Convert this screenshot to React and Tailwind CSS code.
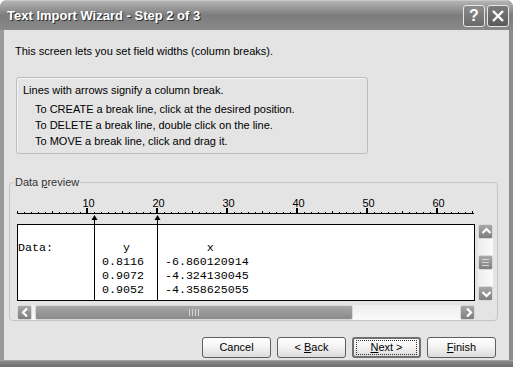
const dataLines = [
  '',
  'Data:          y           x',
  '            0.8116   -6.860120914',
  '            0.9072   -4.324130045',
  '            0.9052   -4.358625055',
];

const Ruler = () => {
  const ticks = [];
  for (let n = 0; n <= 65; n++) {
    if (n % 10 === 0 && n > 0) {
      ticks.push(<rect key={n} x={7 * n - 1} y={12} width={2} height={6} fill="#000" />);
    } else if (n % 5 === 0) {
      ticks.push(<rect key={n} x={7 * n} y={15} width={1} height={3} fill="#000" />);
    } else {
      ticks.push(<rect key={n} x={7 * n} y={16} width={1} height={2} fill="#000" />);
    }
  }
  return (
    <svg width="458" height="28" className="block">
      {[10, 20, 30, 40, 50, 60].map(n => (
        <text
          key={n}
          x={7 * n + 1.5}
          y={11}
          textAnchor="middle"
          fontSize="11"
          fontFamily="Liberation Sans, Arial, sans-serif"
          fill="#000"
        >
          {n}
        </text>
      ))}
      <rect x={0} y={17} width={457} height={1} fill="#000" />
      {ticks}
      {/* break arrows */}
      <polygon points="77.5,19 74.5,24 80.5,24" fill="#000" />
      <polygon points="140.5,19 137.5,24 143.5,24" fill="#000" />
    </svg>
  );
};

const Chevron = ({ dir }) => {
  const paths = {
    up: 'M3.5 9 L7.5 5 L11.5 9',
    down: 'M3.5 6 L7.5 10 L11.5 6',
    left: 'M9 3.5 L5 7.5 L9 11.5',
    right: 'M6 3.5 L10 7.5 L6 11.5',
  };
  return (
    <svg width="15" height="15" className="block">
      <path d={paths[dir]} stroke="#fff" strokeWidth="2.2" fill="none" />
    </svg>
  );
};

const ScrollButton = ({ dir }) => (
  <div className="w-[15px] h-[15px] rounded-[2px] border border-[#d8d8d8] bg-gradient-to-b from-[#a8a8a8] to-[#7e7e7e] flex items-center justify-center overflow-hidden">
    <Chevron dir={dir} />
  </div>
);

const WizButton = ({ children, focused }) => (
  <button
    className={`w-[69px] h-[21px] rounded-[3px] text-[11px] leading-none text-black flex items-center justify-center bg-gradient-to-b from-[#ffffff] via-[#f2f2f2] to-[#dcdcdc] ${
      focused ? 'border-2 border-[#6f6f6f]' : 'border border-[#5e5e5e]'
    }`}
  >
    <span
      className={`flex items-center justify-center ${
        focused ? 'w-[61px] h-[15px] border border-dotted border-[#333]' : ''
      }`}
    >
      {children}
    </span>
  </button>
);

export default function App() {
  return (
    <div className="w-[513px] h-[367px] bg-white overflow-hidden font-['Liberation_Sans',Arial,sans-serif]">
      <div className="h-full flex flex-col rounded-t-[7px] overflow-hidden bg-gradient-to-r from-[#9a9a9a] via-[#868686] to-[#8c8c8c]">
        {/* Title bar */}
        <div className="h-[30px] flex items-center pl-[7px] pr-[4px] bg-gradient-to-b from-[#b4b4b4] via-[#7c7c7c] to-[#8a8a8a] border-t border-[#c8c8c8]">
          <span className="text-[13px] font-bold text-white [text-shadow:1px_1px_0_#2e2e2e] flex-1">
            Text Import Wizard - Step 2 of 3
          </span>
          <div className="flex gap-[2px]">
            <div className="w-[22px] h-[22px] rounded-[3px] border border-[#e6e6e6] bg-gradient-to-b from-[#8c8c8c] to-[#6a6a6a] flex items-center justify-center text-white font-bold text-[16px] leading-none">
              ?
            </div>
            <div className="w-[22px] h-[22px] rounded-[3px] border border-[#e6e6e6] bg-gradient-to-b from-[#7c7c7c] to-[#5a5a5a] flex items-center justify-center">
              <svg width="14" height="14">
                <path d="M2 2 L12 12 M12 2 L2 12" stroke="#fff" strokeWidth="2.4" />
              </svg>
            </div>
          </div>
        </div>

        {/* Body */}
        <div className="flex-1 mx-[4px] bg-[#e4e4e4] flex flex-col text-[11px] text-black">
          <p className="mt-[15px] ml-[11px] leading-[13px]">
            This screen lets you set field widths (column breaks).
          </p>

          <div className="mt-[19px] ml-[12px] w-[352px] h-[77px] rounded-[3px] border border-[#bcbcbc] shadow-[inset_1px_1px_0_#f4f4f4] pt-[6px] pl-[6px]">
            <div className="leading-[13px]">Lines with arrows signify a column break.</div>
            <div className="mt-[4px] pl-[12px] leading-[16px]">
              <div>To CREATE a break line, click at the desired position.</div>
              <div>To DELETE a break line, double click on the line.</div>
              <div>To MOVE a break line, click and drag it.</div>
            </div>
          </div>

          <fieldset className="mt-[22px] ml-[5px] w-[489px] h-[145px] rounded-[4px] border border-[#c4c4c4] px-0 pb-0">
            <legend className="ml-[4px] px-[1px] leading-[13px] text-[#333]">
              Data <span className="underline">p</span>review
            </legend>
            <div className="pl-[7px] pt-[7px]">
              <div className="flex items-start">
                <div className="relative w-[458px]">
                  <Ruler />
                  <div className="h-[77px] border border-black bg-white overflow-hidden pt-[2px] pl-[0px]">
                    {dataLines.map((line, i) => (
                      <div
                        key={i}
                        className="h-[14px] leading-[14px] whitespace-pre font-['Liberation_Mono','Courier_New',monospace] text-[11.67px]"
                      >
                        {line}
                      </div>
                    ))}
                  </div>
                  {/* column break lines */}
                  <div className="absolute left-[77px] top-[24px] bottom-0 w-px bg-black" />
                  <div className="absolute left-[140px] top-[24px] bottom-0 w-px bg-black" />
                </div>

                {/* vertical scrollbar */}
                <div className="ml-[3px] mt-[28px] w-[15px] h-[77px] flex flex-col justify-between bg-gradient-to-r from-[#eeeeee] to-[#fafafa]">
                  <ScrollButton dir="up" />
                  <div className="w-[15px] h-[15px] rounded-[2px] border border-[#d8d8d8] bg-gradient-to-b from-[#a8a8a8] to-[#7e7e7e] flex flex-col items-center justify-center gap-[2px]">
                    <div className="w-[7px] h-px bg-[#d6d6d6]" />
                    <div className="w-[7px] h-px bg-[#d6d6d6]" />
                    <div className="w-[7px] h-px bg-[#d6d6d6]" />
                  </div>
                  <ScrollButton dir="down" />
                </div>
              </div>

              {/* horizontal scrollbar */}
              <div className="mt-[4px] w-[458px] h-[15px] flex items-center bg-gradient-to-b from-[#eeeeee] to-[#fafafa]">
                <ScrollButton dir="left" />
                <div className="ml-[3px] w-[318px] h-[15px] rounded-[2px] border border-[#d8d8d8] bg-gradient-to-b from-[#a6a6a6] to-[#8a8a8a] flex items-center justify-center gap-[2px]">
                  <div className="w-px h-[7px] bg-[#d6d6d6]" />
                  <div className="w-px h-[7px] bg-[#d6d6d6]" />
                  <div className="w-px h-[7px] bg-[#d6d6d6]" />
                  <div className="w-px h-[7px] bg-[#d6d6d6]" />
                </div>
                <div className="flex-1" />
                <ScrollButton dir="right" />
              </div>
            </div>
          </fieldset>

          <div className="mt-[16px] pr-[13px] flex justify-end gap-[6px]">
            <WizButton>Cancel</WizButton>
            <WizButton>
              &lt; <span className="underline ml-[3px]">B</span>ack
            </WizButton>
            <WizButton focused>
              <span className="underline">N</span>ext &gt;
            </WizButton>
            <WizButton>
              <span className="underline">F</span>inish
            </WizButton>
          </div>
        </div>

        {/* bottom frame */}
        <div className="h-[7px] border-t border-[#a0a0a0] bg-gradient-to-b from-[#8a8a8a] to-[#6e6e6e]" />
      </div>
    </div>
  );
}
